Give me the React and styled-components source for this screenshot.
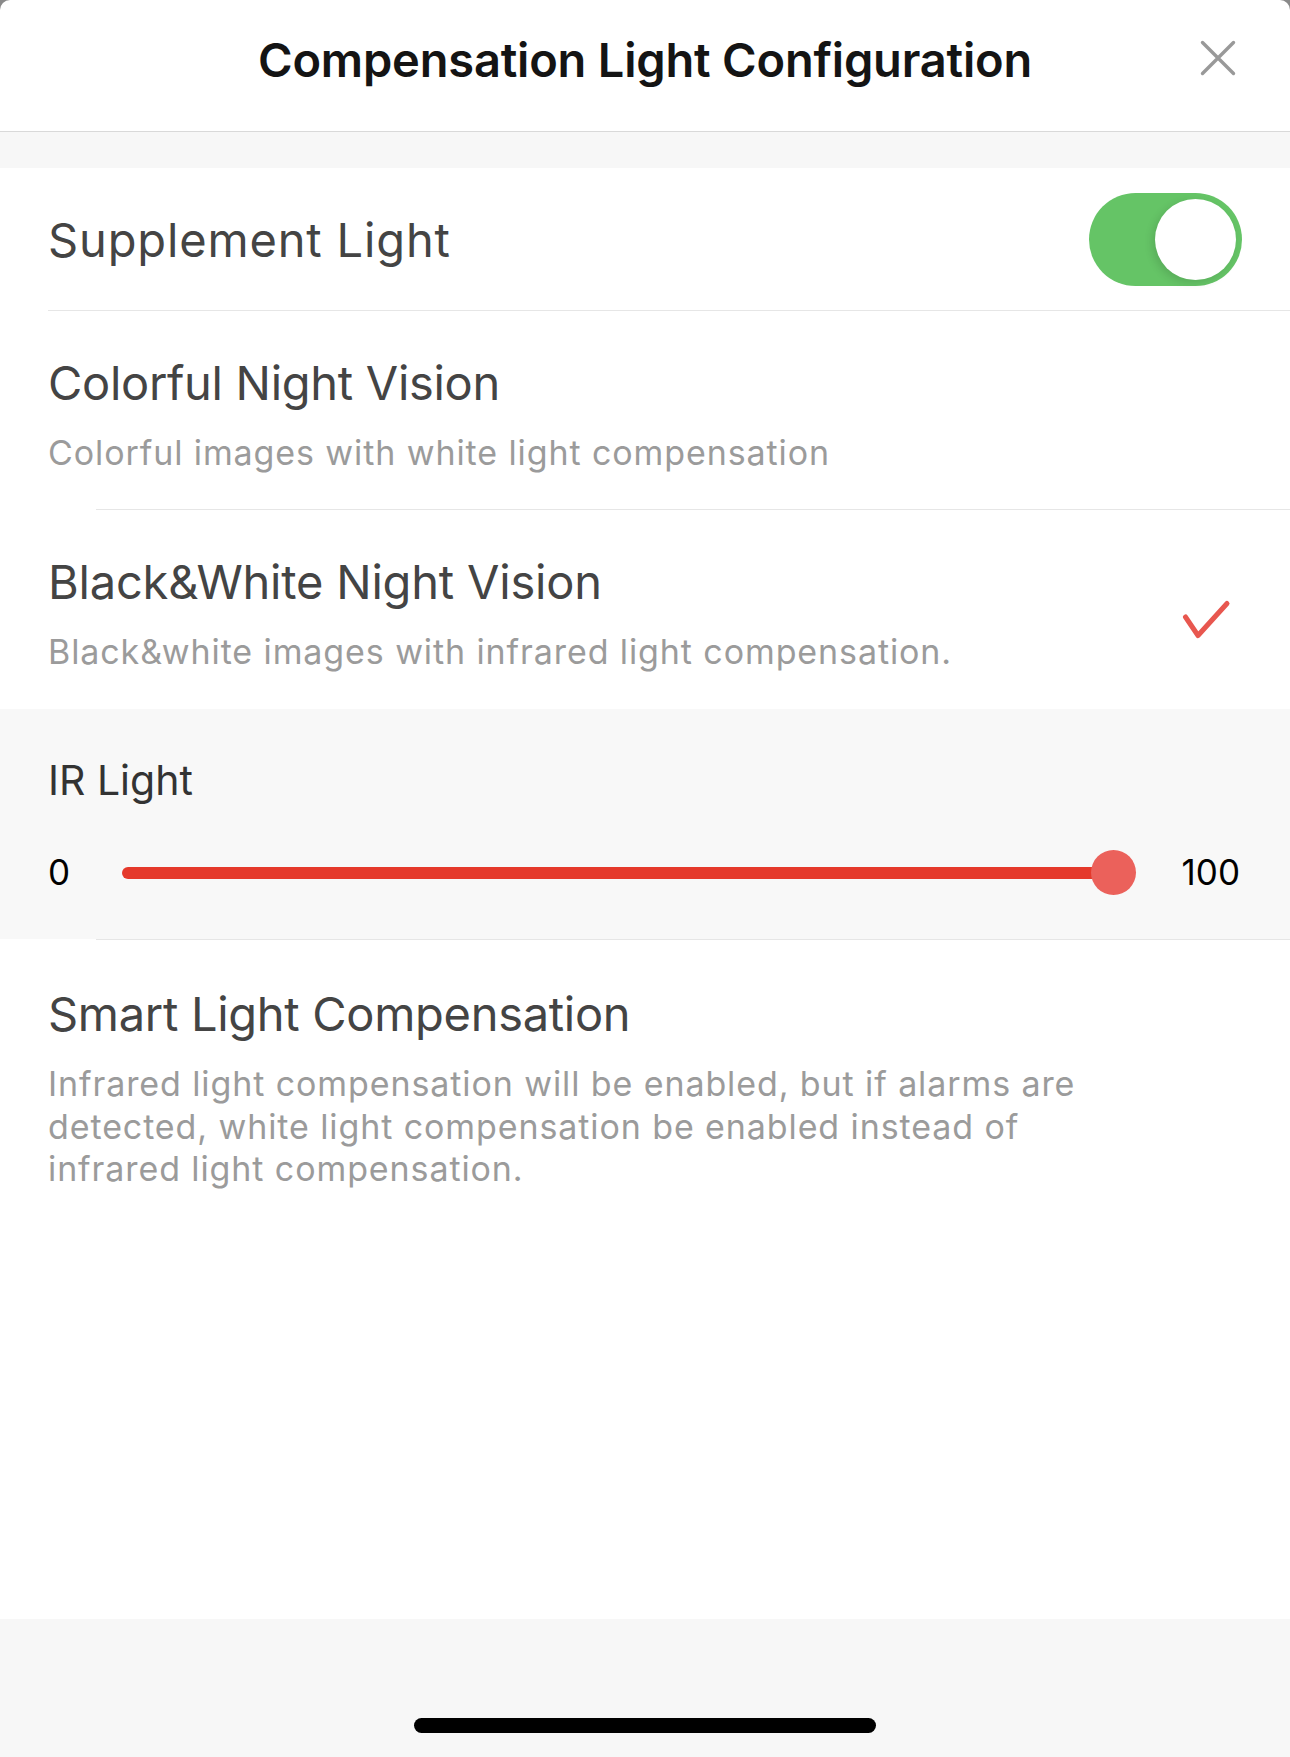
import React from "react";
import styled, { createGlobalStyle } from "styled-components";

const GlobalStyle = createGlobalStyle`
  html, body {
    margin: 0;
    padding: 0;
    background: #8a8a8a;
  }
  body {
    font-family: Inter, "Noto Sans", "Liberation Sans", sans-serif;
    -webkit-font-smoothing: antialiased;
  }
  * { box-sizing: border-box; }
`;

const Sheet = styled.div`
  min-height: 100vh;
  display: flex;
  flex-direction: column;
  background: #fff;
  border-radius: 10px 10px 0 0;
  overflow: hidden;
`;

const Header = styled.header`
  height: 132px;
  padding: 30px 52px 0 52px;
  display: grid;
  grid-template-columns: 1fr auto 1fr;
  align-items: start;
  border-bottom: 1px solid #d9d9d9;
`;

const Title = styled.h1`
  grid-column: 2;
  margin: 0;
  font-size: 47px;
  line-height: 60px;
  font-weight: 600;
  color: #141414;
  letter-spacing: -0.2px;
`;

const CloseButton = styled.button`
  grid-column: 3;
  justify-self: end;
  margin-top: 8px;
  width: 40px;
  height: 40px;
  padding: 0;
  border: 0;
  background: none;
  display: flex;
`;

const Gap = styled.div`
  height: 36px;
  background: #f7f7f7;
`;

const Row = styled.div`
  display: flex;
  align-items: center;
  padding: ${(p) => p.$pad || "44px 58px 35px 48px"};
  min-height: ${(p) => p.$minH || "auto"};
  background: #fff;
  position: relative;
  ${(p) => (p.$grow ? "flex: 1; align-items: flex-start;" : "")}

  &::after {
    content: "";
    display: ${(p) => (p.$line ? "block" : "none")};
    position: absolute;
    left: ${(p) => p.$line}px;
    right: 0;
    bottom: 0;
    height: 1px;
    background: #e6e6e6;
  }
`;

const Texts = styled.div`
  flex: 1;
  display: flex;
  flex-direction: column;
  gap: ${(p) => p.$gap || "20px"};
`;

const RowTitle = styled.div`
  font-size: 47px;
  line-height: 56px;
  color: #444;
  letter-spacing: ${(p) => p.$ls || "-0.1px"};
`;

const RowDesc = styled.div`
  font-size: 34px;
  line-height: ${(p) => p.$lh || "44px"};
  color: #9b9b9b;
  letter-spacing: 0.9px;
  max-width: ${(p) => p.$max || "none"};
`;

const Toggle = styled.div`
  width: 153px;
  height: 93px;
  border-radius: 47px;
  background: #65c466;
  display: flex;
  align-items: center;
  justify-content: ${(p) => (p.$on ? "flex-end" : "flex-start")};
  padding: 0 6px;
  flex: none;
`;

const Knob = styled.div`
  width: 81px;
  height: 81px;
  border-radius: 50%;
  background: #fff;
  box-shadow: -3px 3px 8px rgba(0, 0, 0, 0.12);
`;

const Spacer = styled.span`
  flex: 1;
`;

const Check = styled.svg`
  width: 52px;
  height: 44px;
  margin-top: 10px;
  flex: none;
`;

const IrSection = styled.section`
  background: #f8f8f8;
  padding: 47px 50px 37px 48px;
  display: flex;
  flex-direction: column;
  gap: 38px;
`;

const IrTitle = styled.div`
  font-size: 41px;
  line-height: 48px;
  color: #333;
`;

const SliderRow = styled.div`
  display: flex;
  align-items: center;
  height: 60px;
`;

const RangeLabel = styled.span`
  font-size: 35px;
  line-height: 40px;
  color: #000;
  width: ${(p) => p.$w || "auto"};
  padding-left: ${(p) => p.$pl || "0"};
  flex: none;
`;

const Track = styled.div`
  flex: 1;
  height: 45px;
  position: relative;
`;

const Fill = styled.div`
  position: absolute;
  left: 0;
  top: 17px;
  height: 12px;
  border-radius: 6px;
  background: #e5392b;
`;

const Thumb = styled.div`
  position: absolute;
  top: 0;
  width: 45px;
  height: 45px;
  border-radius: 50%;
  background: #eb615b;
`;

const Divider = styled.div`
  height: 1px;
  background: #e6e6e6;
  margin-left: 96px;
`;

const Footer = styled.footer`
  height: 138px;
  background: #f7f7f7;
  display: flex;
  justify-content: center;
  padding-top: 99px;
`;

const HomeBar = styled.div`
  width: 462px;
  height: 15px;
  border-radius: 8px;
  background: #000;
`;

const CloseIcon = () => (
  <svg width="40" height="40" viewBox="0 0 40 40">
    <path d="M4.5 4.5 L35.5 35.5 M35.5 4.5 L4.5 35.5" stroke="#999" strokeWidth="3.4" strokeLinecap="round" fill="none" />
  </svg>
);

const Slider = ({ min, max, value }) => {
  const pct = (value - min) / (max - min);
  return (
    <SliderRow>
      <RangeLabel $w="74px">{min}</RangeLabel>
      <Track>
        <Fill style={{ width: `calc((100% - 22px) * ${pct})` }} />
        <Thumb style={{ left: `calc((100% - 45px) * ${pct})` }} />
      </Track>
      <RangeLabel $pl="46px">{max}</RangeLabel>
    </SliderRow>
  );
};

export default function App() {
  return (
    <>
      <GlobalStyle />
      <Sheet>
        <Header>
          <Title>Compensation Light Configuration</Title>
          <CloseButton aria-label="Close">
            <CloseIcon />
          </CloseButton>
        </Header>
        <Gap />

        <Row $pad="0 48px 0 48px" $minH="143px" $line={48}>
          <RowTitle $ls="0.85px">Supplement Light</RowTitle>
          <Spacer />
          <Toggle $on>
            <Knob />
          </Toggle>
        </Row>

        <Row $line={96}>
          <Texts>
            <RowTitle $ls="-0.3px">Colorful Night Vision</RowTitle>
            <RowDesc>Colorful images with white light compensation</RowDesc>
          </Texts>
        </Row>

        <Row>
          <Texts>
            <RowTitle $ls="-0.2px">Black&amp;White Night Vision</RowTitle>
            <RowDesc>Black&amp;white images with infrared light compensation.</RowDesc>
          </Texts>
          <Check viewBox="0 0 52 44">
            <path d="M5.5 20 L18 38.5 L47 6.5" stroke="#e8574f" strokeWidth="5" strokeLinecap="round" strokeLinejoin="round" fill="none" />
          </Check>
        </Row>

        <IrSection>
          <IrTitle>IR Light</IrTitle>
          <Slider min={0} max={100} value={100} />
        </IrSection>
        <Divider />

        <Row $grow $pad="46px 48px 0 48px">
          <Texts $gap="21px">
            <RowTitle $ls="-0.3px">Smart Light Compensation</RowTitle>
            <RowDesc $lh="42.5px" $max="1070px">
              Infrared light compensation will be enabled, but if alarms are detected, white light compensation be enabled instead of infrared light compensation.
            </RowDesc>
          </Texts>
        </Row>

        <Footer>
          <HomeBar />
        </Footer>
      </Sheet>
    </>
  );
}
